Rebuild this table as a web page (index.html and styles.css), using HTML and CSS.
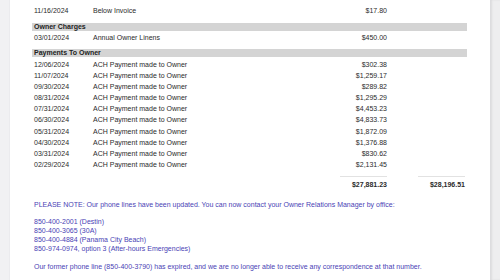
FILE: index.html
```html
<!DOCTYPE html>
<html>
<head>
<meta charset="utf-8">
<link rel="stylesheet" href="styles.css">
</head>
<body>
<div class="viewer">
  <div class="gutter gutter-left"></div>
  <div class="page">
    <div class="ledger">
      <div class="row"><span>11/16/2024</span><span>Below Invoice</span><span class="amt">$17.80</span><span></span></div>
      <div class="section">Owner Charges</div>
      <div class="row"><span>03/01/2024</span><span>Annual Owner Linens</span><span class="amt">$450.00</span><span></span></div>
      <div class="section">Payments To Owner</div>
      <div class="row"><span>12/06/2024</span><span>ACH Payment made to Owner</span><span class="amt">$302.38</span><span></span></div>
      <div class="row"><span>11/07/2024</span><span>ACH Payment made to Owner</span><span class="amt">$1,259.17</span><span></span></div>
      <div class="row"><span>09/30/2024</span><span>ACH Payment made to Owner</span><span class="amt">$289.82</span><span></span></div>
      <div class="row"><span>08/31/2024</span><span>ACH Payment made to Owner</span><span class="amt">$1,295.29</span><span></span></div>
      <div class="row"><span>07/31/2024</span><span>ACH Payment made to Owner</span><span class="amt">$4,453.23</span><span></span></div>
      <div class="row"><span>06/30/2024</span><span>ACH Payment made to Owner</span><span class="amt">$4,833.73</span><span></span></div>
      <div class="row"><span>05/31/2024</span><span>ACH Payment made to Owner</span><span class="amt">$1,872.09</span><span></span></div>
      <div class="row"><span>04/30/2024</span><span>ACH Payment made to Owner</span><span class="amt">$1,376.88</span><span></span></div>
      <div class="row"><span>03/31/2024</span><span>ACH Payment made to Owner</span><span class="amt">$830.62</span><span></span></div>
      <div class="row"><span>02/29/2024</span><span>ACH Payment made to Owner</span><span class="amt">$2,131.45</span><span></span></div>
      <div class="row totals"><span></span><span></span><span class="amt"><b class="total">$27,881.23</b></span><span class="amt"><b class="total">$28,196.51</b></span></div>
    </div>
    <div class="note">
      <p>PLEASE NOTE: Our phone lines have been updated. You can now contact your Owner Relations Manager by office:</p>
      <p>850-400-2001 (Destin)<br>850-400-3065 (30A)<br>850-400-4884 (Panama City Beach)<br>850-974-0974, option 3 (After-hours Emergencies)</p>
      <p>Our former phone line (850-400-3790) has expired, and we are no longer able to receive any correspondence at that number.</p>
    </div>
  </div>
  <div class="gutter gutter-right"></div>
</div>
</body>
</html>
```
FILE: styles.css
```css
html, body {
  margin: 0;
  padding: 0;
  background: #f2f2f4;
}
body {
  font-family: "Liberation Sans", Arial, sans-serif;
  font-size: 7px;
  color: #2b2b2b;
}
.viewer {
  display: flex;
  width: 500px;
  height: 280px;
  overflow: hidden;
}
.gutter {
  flex: 0 0 10px;
}
.gutter-left {
  background: #f1f1f3;
  box-shadow: inset -1px 0 0 #ebebee;
}
.gutter-right {
  background: #eeeeef;
  box-shadow: inset 2px 0 2px #dcdcde;
}
.page {
  flex: 1;
  background: #fff;
  padding: 5.4px 0 0 22px;
}
.ledger {
  width: 435px;
}
.row {
  display: grid;
  grid-template-columns: 59px 220px 78px 78px;
  line-height: 11.2px;
  height: 11.2px;
}
.row span {
  padding-left: 2px;
  white-space: nowrap;
}
.row span.amt {
  text-align: right;
  padding: 0 2px 0 0;
}
.section {
  margin: 6px 0 1.4px;
  height: 8px;
  line-height: 8px;
  background: #d4d4d4;
  font-weight: bold;
  padding-left: 2px;
  color: #222;
}
.totals {
  margin-top: 6px;
  height: auto;
}
.total {
  display: inline-block;
  width: 47px;
  border-top: 1px solid #e2e2e2;
  padding-top: 2px;
  text-align: right;
  font-weight: bold;
}
.note {
  margin-top: 10px;
  padding-left: 2px;
  color: #4a3fb5;
  line-height: 8.9px;
}
.note p {
  margin: 0 0 8.9px;
}
```
